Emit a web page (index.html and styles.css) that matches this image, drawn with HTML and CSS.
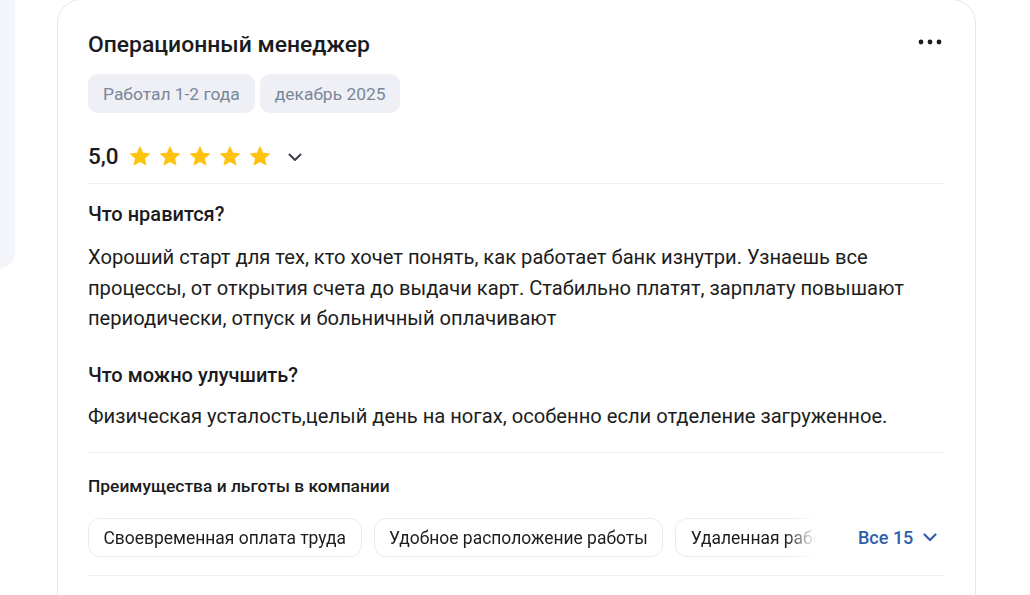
FILE: index.html
```html
<!DOCTYPE html>
<html lang="ru">
<head>
<meta charset="utf-8">
<link rel="stylesheet" href="styles.css">
</head>
<body>
<div class="page">
  <aside class="side-panel"></aside>
  <article class="review-card">
    <header class="review-head">
      <h2 class="review-title">Операционный менеджер</h2>
      <button class="more-btn" aria-label="Ещё">
        <svg width="24" height="6" viewBox="0 0 24 6"><circle cx="3" cy="3" r="2.4"/><circle cx="12" cy="3" r="2.4"/><circle cx="21" cy="3" r="2.4"/></svg>
      </button>
    </header>
    <div class="tags">
      <span class="tag">Работал 1-2 года</span>
      <span class="tag">декабрь 2025</span>
    </div>
    <div class="rating">
      <span class="rating-value">5,0</span>
      <span class="stars">
        <svg class="star" viewBox="0 0 24 24"><path d="M12 1.8l3.1 6.9 7.4.7-5.6 5 1.7 7.4L12 17.9l-6.6 3.9 1.7-7.4-5.6-5 7.4-.7z"/></svg>
        <svg class="star" viewBox="0 0 24 24"><path d="M12 1.8l3.1 6.9 7.4.7-5.6 5 1.7 7.4L12 17.9l-6.6 3.9 1.7-7.4-5.6-5 7.4-.7z"/></svg>
        <svg class="star" viewBox="0 0 24 24"><path d="M12 1.8l3.1 6.9 7.4.7-5.6 5 1.7 7.4L12 17.9l-6.6 3.9 1.7-7.4-5.6-5 7.4-.7z"/></svg>
        <svg class="star" viewBox="0 0 24 24"><path d="M12 1.8l3.1 6.9 7.4.7-5.6 5 1.7 7.4L12 17.9l-6.6 3.9 1.7-7.4-5.6-5 7.4-.7z"/></svg>
        <svg class="star" viewBox="0 0 24 24"><path d="M12 1.8l3.1 6.9 7.4.7-5.6 5 1.7 7.4L12 17.9l-6.6 3.9 1.7-7.4-5.6-5 7.4-.7z"/></svg>
      </span>
      <svg class="chev" width="14" height="9" viewBox="0 0 14 9"><path d="M1.5 1.5l5.5 5.5 5.5-5.5" fill="none" stroke="#3a3f48" stroke-width="2" stroke-linecap="round" stroke-linejoin="round"/></svg>
    </div>
    <hr class="sep sep-rating">
    <section class="block">
      <h3 class="block-title">Что нравится?</h3>
      <p class="block-text">Хороший старт для тех, кто хочет понять, как работает банк изнутри. Узнаешь все процессы, от открытия счета до выдачи карт. Стабильно платят, зарплату повышают периодически, отпуск и больничный оплачивают</p>
    </section>
    <section class="block block-second">
      <h3 class="block-title">Что можно улучшить?</h3>
      <p class="block-text">Физическая усталость,целый день на ногах, особенно если отделение загруженное.</p>
    </section>
    <hr class="sep sep-benefits">
    <h4 class="benefits-title">Преимущества и льготы в компании</h4>
    <div class="benefits-row">
      <div class="chips">
        <span class="chip">Своевременная оплата труда</span>
        <span class="chip">Удобное расположение работы</span>
        <span class="chip">Удаленная работа</span>
      </div>
      <button class="all-btn">Все 15
        <svg width="14" height="9" viewBox="0 0 14 9"><path d="M1.5 1.5l5.5 5.5 5.5-5.5" fill="none" stroke="#2f5fa8" stroke-width="2.2" stroke-linecap="round" stroke-linejoin="round"/></svg>
      </button>
    </div>
    <hr class="sep sep-bottom">
  </article>
</div>
</body>
</html>
```

FILE: styles.css
```css
* { box-sizing: border-box; }
html, body {
  margin: 0;
  padding: 0;
  background: #ffffff;
  overflow: hidden;
}
body {
  font-family: Roboto, "Liberation Sans", Arial, sans-serif;
  color: #1c1d20;
  width: 1030px;
  height: 595px;
}
.page {
  display: flex;
  align-items: flex-start;
  height: 595px;
}
.side-panel {
  width: 15px;
  height: 268px;
  background: #f4f5fa;
  border-bottom-right-radius: 16px;
  flex-shrink: 0;
}
.review-card {
  margin-left: 42px;
  margin-top: -1px;
  width: 919px;
  height: 640px;
  border: 1px solid #e2e6ee;
  border-radius: 24px;
  padding: 31px 30px 0 30px;
  background: #fff;
}
.review-head {
  display: flex;
  justify-content: space-between;
  align-items: center;
  height: 28px;
}
.review-title {
  margin: 0;
  font-size: 22.9px;
  line-height: 28px;
  font-weight: 500;
  color: #1a1b1e;
}
.more-btn {
  border: 0;
  background: none;
  padding: 0;
  margin-right: 3px;
  margin-top: -7px;
  display: flex;
  fill: #1c1d20;
}
.tags {
  display: flex;
  gap: 5px;
  margin-top: 15px;
}
.tag {
  height: 39px;
  display: inline-flex;
  align-items: center;
  padding: 0 15px;
  background: #eef0f6;
  border-radius: 10px;
  color: #7b8699;
  font-size: 17.4px;
}
.rating {
  display: flex;
  align-items: center;
  height: 32px;
  margin-top: 27px;
}
.rating-value {
  font-size: 22.5px;
  font-weight: 500;
  color: #1a1b1e;
  margin-right: 9px;
}
.stars {
  display: flex;
  gap: 6px;
}
.star {
  width: 24px;
  height: 24px;
  fill: #ffc20e;
}
.chev {
  margin-left: 16px;
  margin-top: 2px;
}
.sep {
  border: 0;
  border-top: 1px solid #eef0f4;
  margin: 0;
}
.sep-rating { margin-top: 11px; }
.block-title {
  margin: 18px 0 0 0;
  font-size: 20px;
  line-height: 24px;
  font-weight: 500;
  color: #1a1b1e;
}
.block-text {
  margin: 16px 0 0 0;
  font-size: 20.15px;
  line-height: 30.5px;
  color: #1c1d20;
}
.block-second .block-title { margin-top: 29px; }
.block-second .block-text { margin-top: 14px; }
.sep-benefits { margin-top: 21px; }
.benefits-title {
  margin: 22px 0 0 0;
  font-size: 17.4px;
  line-height: 22px;
  font-weight: 500;
  color: #1a1b1e;
}
.benefits-row {
  display: flex;
  align-items: center;
  margin-top: 21px;
}
.chips {
  flex: 0 0 728px;
  display: flex;
  gap: 12px;
  overflow: hidden;
  white-space: nowrap;
  -webkit-mask-image: linear-gradient(to right, #000 calc(100% - 30px), transparent);
  mask-image: linear-gradient(to right, #000 calc(100% - 30px), transparent);
}
.chip {
  flex-shrink: 0;
  height: 39px;
  display: inline-flex;
  align-items: center;
  padding: 0 14.5px;
  border: 1px solid #e8eaf1;
  border-radius: 12px;
  font-size: 17.45px;
  color: #1c1d20;
}
.all-btn {
  margin-left: 42px;
  border: 0;
  background: none;
  padding: 0;
  display: inline-flex;
  align-items: center;
  gap: 10px;
  font-family: inherit;
  font-size: 18px;
  font-weight: 500;
  color: #2f5fa8;
}
.sep-bottom { margin-top: 18px; }
```
